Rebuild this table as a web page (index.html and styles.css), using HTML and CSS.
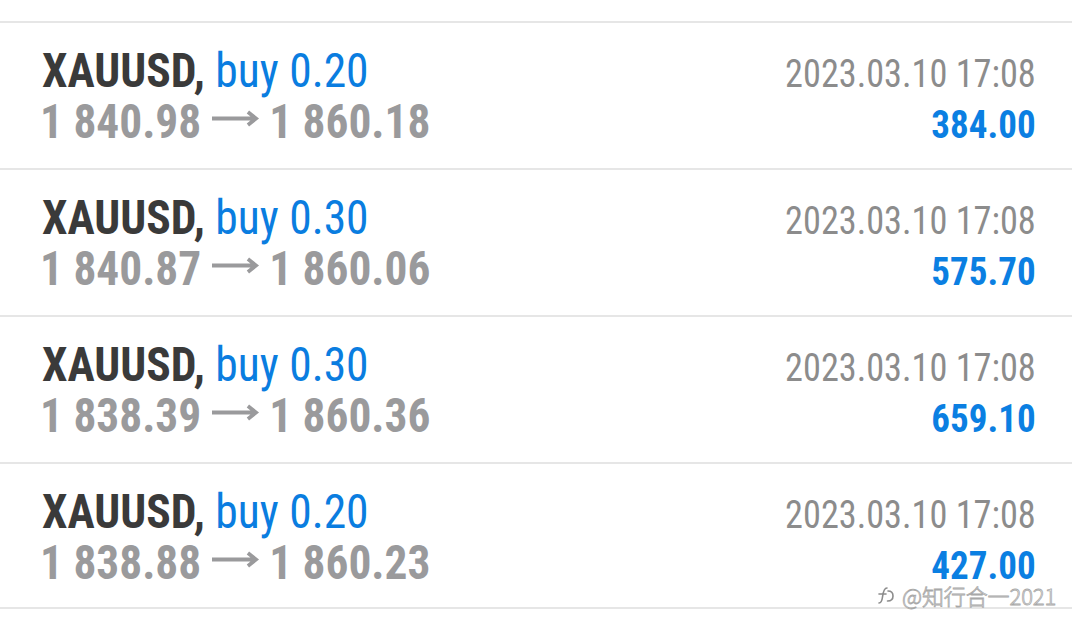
FILE: index.html
```html
<!DOCTYPE html>
<html lang="zh">
<head>
<meta charset="utf-8">
<title>Deals</title>
<link rel="stylesheet" href="styles.css">
</head>
<body>
<main class="list">
  <div class="deal">
    <div class="title"><span class="sym">XAUUSD,</span> <span class="type">buy 0.20</span></div>
    <div class="time">2023.03.10 17:08</div>
    <div class="prices">1 840.98<svg class="arrow" viewBox="0 0 50 16"><path d="M0 8H46M38 1.5L46.5 8L38 14.5"/></svg>1 860.18</div>
    <div class="profit">384.00</div>
  </div>
  <div class="deal">
    <div class="title"><span class="sym">XAUUSD,</span> <span class="type">buy 0.30</span></div>
    <div class="time">2023.03.10 17:08</div>
    <div class="prices">1 840.87<svg class="arrow" viewBox="0 0 50 16"><path d="M0 8H46M38 1.5L46.5 8L38 14.5"/></svg>1 860.06</div>
    <div class="profit">575.70</div>
  </div>
  <div class="deal">
    <div class="title"><span class="sym">XAUUSD,</span> <span class="type">buy 0.30</span></div>
    <div class="time">2023.03.10 17:08</div>
    <div class="prices">1 838.39<svg class="arrow" viewBox="0 0 50 16"><path d="M0 8H46M38 1.5L46.5 8L38 14.5"/></svg>1 860.36</div>
    <div class="profit">659.10</div>
  </div>
  <div class="deal">
    <div class="title"><span class="sym">XAUUSD,</span> <span class="type">buy 0.20</span></div>
    <div class="time">2023.03.10 17:08</div>
    <div class="prices">1 838.88<svg class="arrow" viewBox="0 0 50 16"><path d="M0 8H46M38 1.5L46.5 8L38 14.5"/></svg>1 860.23</div>
    <div class="profit">427.00</div>
  </div>
</main>
<div class="watermark">
  <svg class="wm-icon" width="20" height="22" viewBox="0 0 20 22" fill="none" stroke="#8c8c8c" stroke-width="1.6" stroke-linecap="round" stroke-linejoin="round"><path d="M3 19c2 0 3-2 3.5-6S8 4 11 4"/><path d="M3 10h7"/><path d="M12 7c3 0 5 1.5 5 5s-2.5 5-5.5 5"/></svg>
  <span class="wm-text">@知行合一2021</span>
</div>
</body>
</html>
```
FILE: styles.css
```css
html, body {
  margin: 0;
  padding: 0;
  background: #ffffff;
}
body {
  width: 1072px;
  height: 632px;
  overflow: hidden;
  position: relative;
  font-family: Roboto, "Liberation Sans", sans-serif;
}
.list {
  padding-top: 21px;
}
.deal {
  display: grid;
  grid-template-columns: 1fr auto;
  align-items: baseline;
  align-content: start;
  box-sizing: border-box;
  height: 147px;
  border-top: 2px solid #e6e6e6;
  padding: 22px 36px 0 42px;
}
.deal:last-child {
  border-bottom: 2px solid #e6e6e6;
}
.title, .prices, .time, .profit {
  font-stretch: 75%;
  white-space: nowrap;
}
.title, .prices {
  font-size: 48px;
  line-height: 51px;
  transform-origin: left center;
}
.title {
  transform: scaleX(0.948);
}
.sym {
  font-weight: 700;
  color: #3a3a3a;
}
.type {
  color: #0a7de0;
}
.prices {
  font-weight: 700;
  color: #9a9a9c;
  transform: scaleX(0.945);
  margin-left: -2px;
}
.arrow {
  width: 50px;
  height: 17px;
  margin: 0 11px 0 11px;
  vertical-align: 11px;
  fill: none;
  stroke: #9a9a9c;
  stroke-width: 4;
  stroke-linecap: butt;
  stroke-linejoin: miter;
}
.time, .profit {
  font-size: 38px;
  line-height: 44px;
  text-align: right;
  transform-origin: right center;
}
.time {
  color: #8c8c8c;
  transform: scaleX(0.954);
}
.profit {
  font-weight: 700;
  color: #0b7fe2;
  transform: scaleX(0.975);
}
.watermark {
  position: absolute;
  left: 876px;
  top: 579px;
  display: flex;
  align-items: center;
  gap: 6px;
}
.wm-text {
  font-family: "Noto Sans CJK SC", sans-serif;
  font-size: 22px;
  font-weight: 300;
  color: #ffffff;
  -webkit-text-stroke: 0.8px #a8a8a8;
  letter-spacing: -0.1px;
}
```
